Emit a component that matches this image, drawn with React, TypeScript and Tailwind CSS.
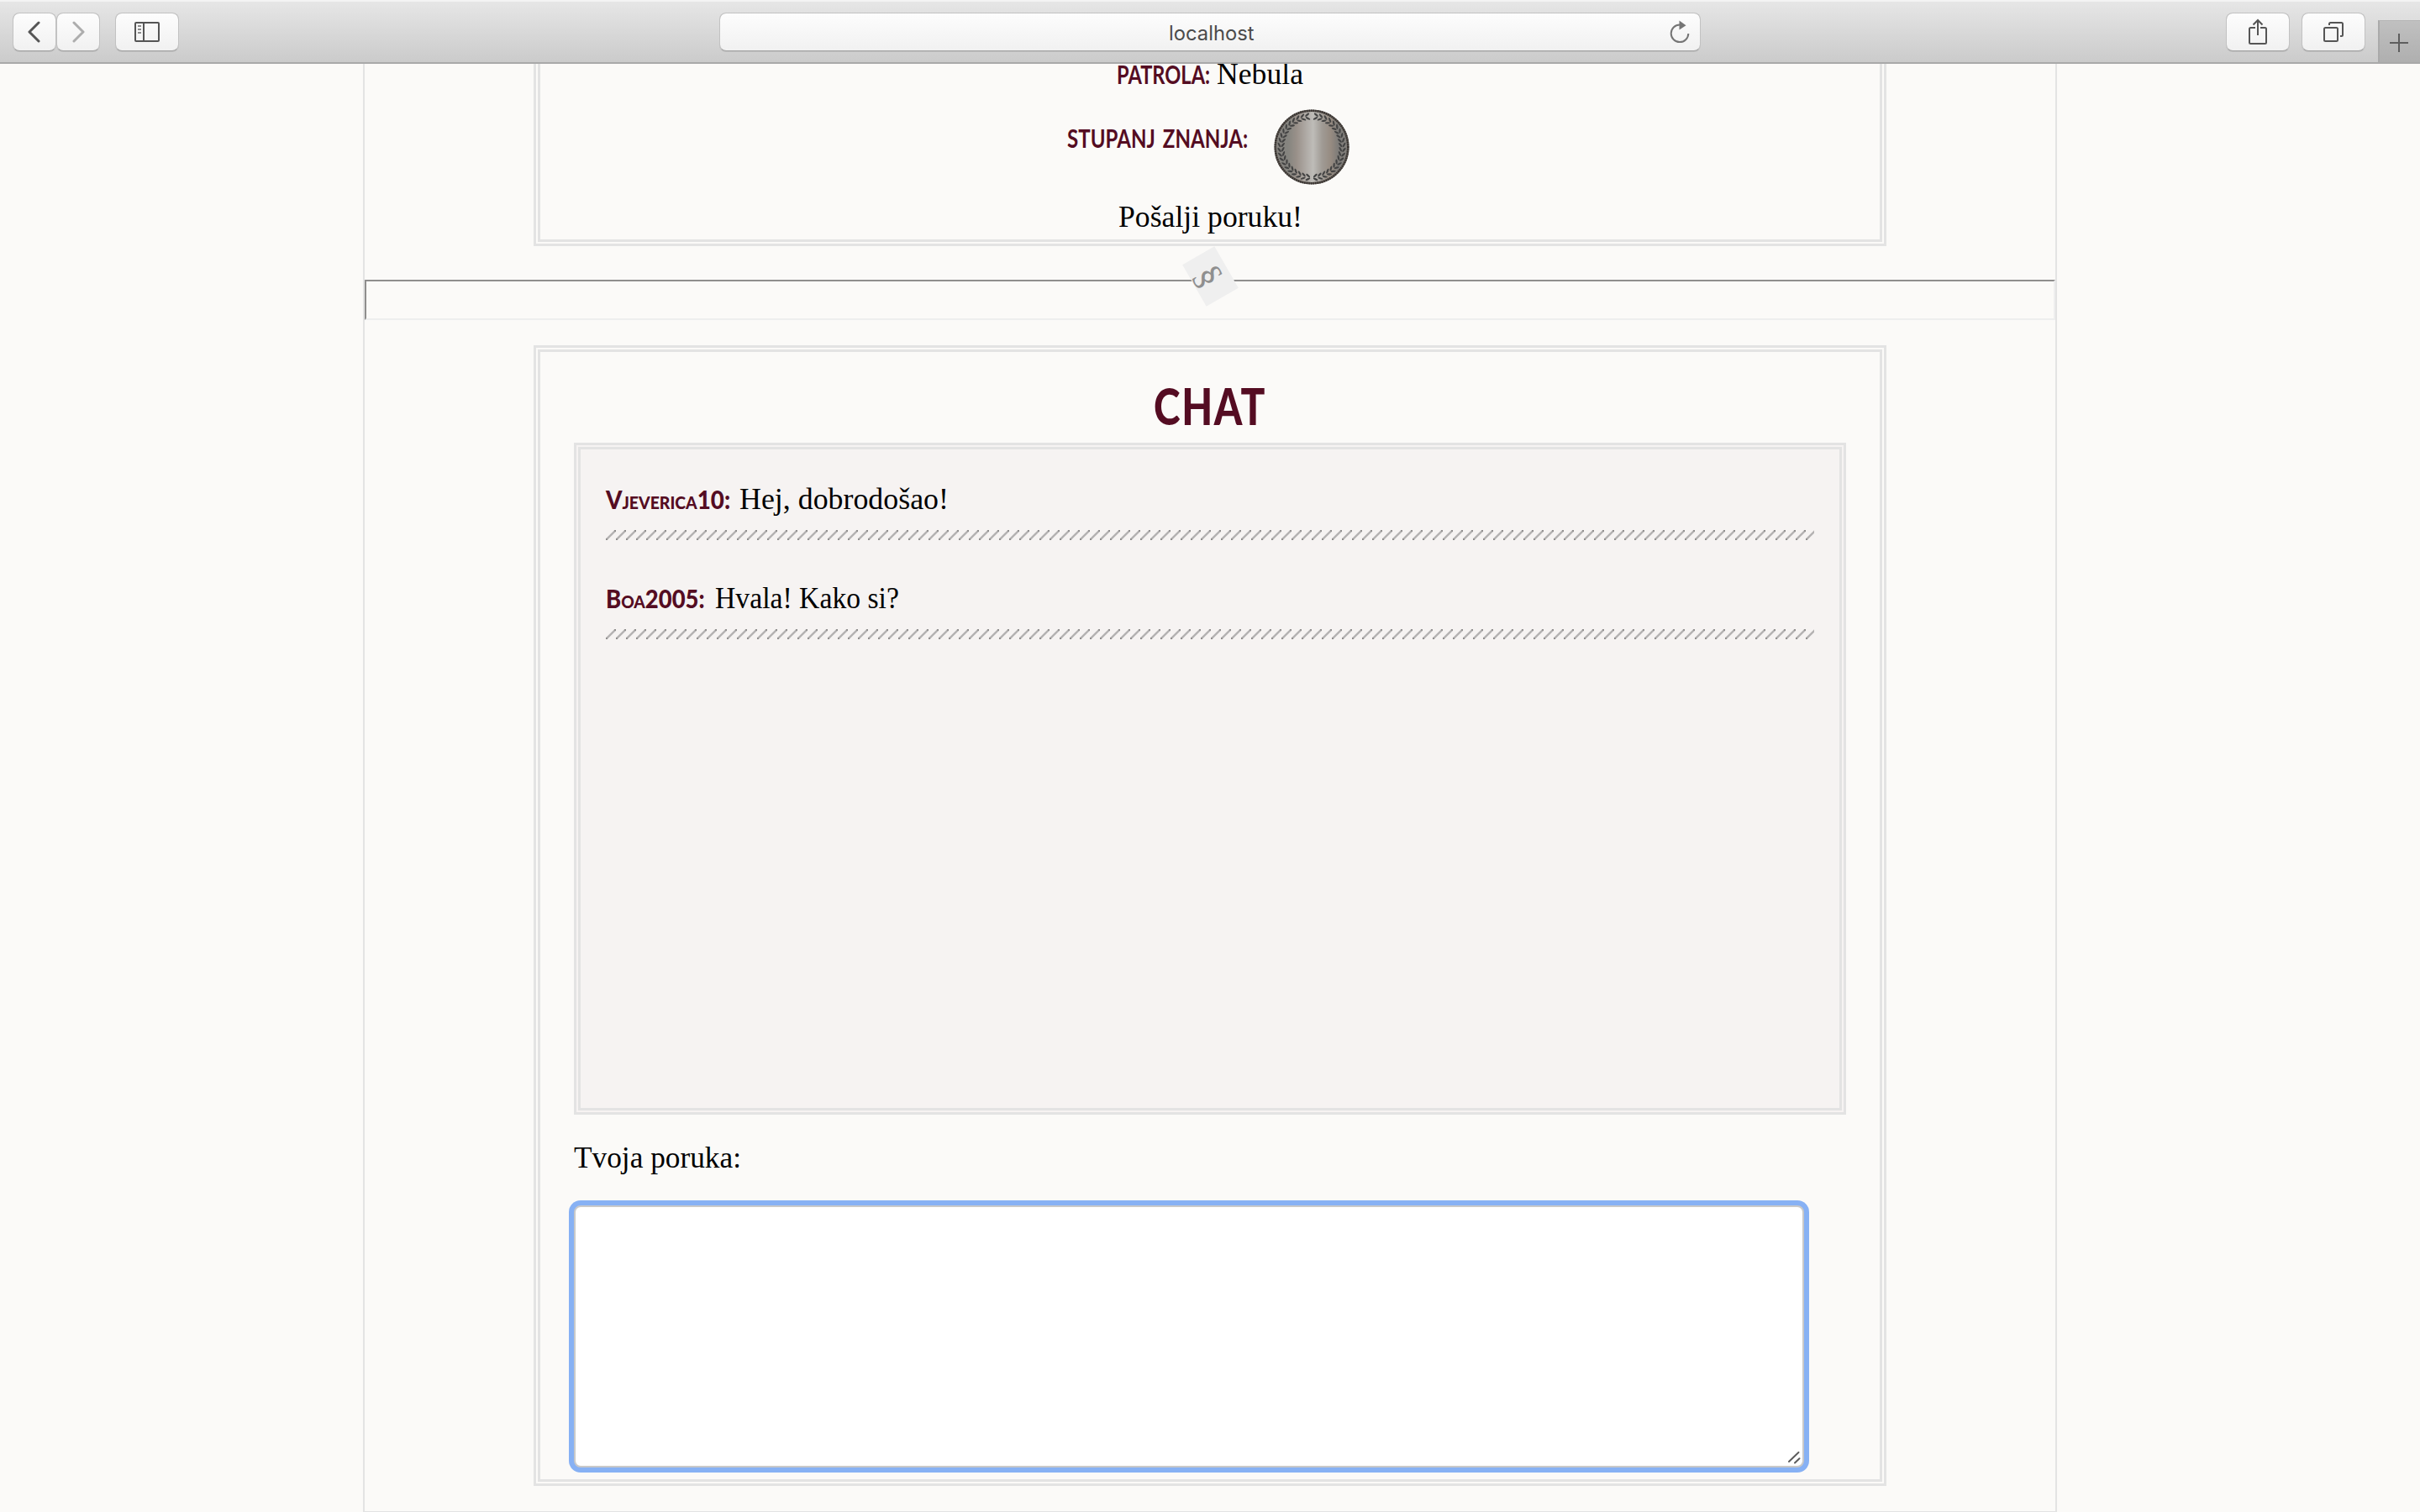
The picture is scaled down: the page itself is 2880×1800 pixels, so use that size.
import React, { useLayoutEffect, useRef, useState } from "react";

/** Text stretched or condensed horizontally to fill the width of its box. */
function FitText({ className, children }: { className: string; children: string }) {
  const box = useRef<HTMLSpanElement>(null);
  const inner = useRef<HTMLSpanElement>(null);
  const [scale, setScale] = useState(1);
  useLayoutEffect(() => {
    if (box.current && inner.current) {
      setScale(box.current.offsetWidth / inner.current.offsetWidth);
    }
  }, [children]);
  return (
    <span ref={box} className={"inline-block shrink-0 whitespace-nowrap " + className}>
      <span ref={inner} className="inline-block origin-left" style={{ transform: `scaleX(${scale})` }}>
        {children}
      </span>
    </span>
  );
}

const serif = "font-['Liberation_Serif',serif] text-[36px] leading-[40px] text-black";
const label = "font-['Lato',sans-serif] text-[30px] leading-[40px] font-bold [word-spacing:4px] text-[#540c22]";
const author = "font-['Lato',sans-serif] text-[30px] leading-[40px] font-black text-[#540c22]";
const button =
  "flex h-[46px] items-center justify-center rounded-[8px] border border-[#c2c2c2] border-b-[#a2a2a2] bg-linear-to-b from-[#fdfdfd] to-[#f1f1f1] bg-clip-padding shadow-[0_1px_0_rgba(0,0,0,0.08)]";

function Toolbar() {
  return (
    <header className="relative z-10 flex h-[76px] w-full shrink-0 items-start border-t-2 border-b-2 border-t-[#f3f3f3] border-b-[#a9a9a9] bg-linear-to-b from-[#e6e6e6] to-[#cbcbcb] pt-[13px] pl-[15px]">
      <div className={button + " w-[52px]"}>
        <svg width="16" height="28" viewBox="0 0 16 28" fill="none" stroke="#555" strokeWidth="3" strokeLinecap="round" strokeLinejoin="round">
          <path d="M13 3 2 14l11 11" />
        </svg>
      </div>
      <div className={button + " w-[52px]"}>
        <svg width="16" height="28" viewBox="0 0 16 28" fill="none" stroke="#adadad" strokeWidth="3" strokeLinecap="round" strokeLinejoin="round">
          <path d="M3 3l11 11L3 25" />
        </svg>
      </div>
      <div className={button + " ml-[18px] w-[76px]"}>
        <svg width="30" height="24" viewBox="0 0 30 24" fill="none" stroke="#555" strokeWidth="2">
          <rect x="1" y="1" width="28" height="22" rx="1" />
          <path d="M11 1v22" />
          <path d="M4 5h4M4 9h4M4 13h4" stroke="#8b8b8b" />
        </svg>
      </div>
      <div className={button + " relative ml-[643px] w-[1168px]"}>
        <FitText className="mt-[3px] mr-[-4px] w-[102px] font-['Inter',sans-serif] text-[24px] leading-[30px] text-[#4b4b4b]">localhost</FitText>
        <svg className="absolute top-[7px] right-[10px]" width="28" height="32" viewBox="0 0 28 32" fill="none">
          <path d="M14 6.5A10.3 10.3 0 1 0 24.3 17" stroke="#757575" strokeWidth="2" />
          <path d="M13.500 1.500 21.500 7.200 13.500 12.500Z" fill="#757575" />
        </svg>
      </div>
      <div className={button + " ml-[625px] w-[76px]"}>
        <svg width="24" height="32" viewBox="0 0 24 32" fill="none" stroke="#555" strokeWidth="2" className="-mt-[2px]">
          <path d="M9 12H3.500Q2 12 2 13.500V29.500Q2 31 3.500 31H20.500Q22 31 22 29.500V13.500Q22 12 20.500 12H15" />
          <path d="M12 21V3M6.500 8.500 12 3l5.500 5.500" />
        </svg>
      </div>
      <div className={button + " ml-[14px] w-[76px]"}>
        <svg width="26" height="26" viewBox="0 0 26 26" fill="none" stroke="#555" strokeWidth="2">
          <rect x="2" y="8" width="16" height="16" rx="1.500" />
          <path d="M8 5V3.500Q8 2 9.500 2H22.500Q24 2 24 3.500V16.500Q24 18 22.500 18H21" />
        </svg>
      </div>
      <div className="mt-[9px] ml-[15px] flex h-[50px] w-[50px] items-center justify-center border-t border-l-2 border-t-[#b5b5b5] border-l-[#aaaaaa] bg-linear-to-b from-[#c0c0c0] to-[#afafaf]">
        <svg width="22" height="22" viewBox="0 0 22 22" stroke="#5e5e5e" strokeWidth="2" className="mt-[3px] mr-[2px]">
          <path d="M11 0v22M0 11h22" />
        </svg>
      </div>
    </header>
  );
}

const leafSteps = Array.from({ length: 20 }, (_, i) => 3.5 + i * 8.7);

function Medal() {
  return (
    <svg width="90" height="90" viewBox="-45 -45 90 90" className="shrink-0">
      <defs>
        <linearGradient id="silver" x1="0" x2="1" y1="0" y2="0">
          <stop offset="0" stopColor="#85827e" />
          <stop offset="0.18" stopColor="#85847f" />
          <stop offset="0.3" stopColor="#9a918a" />
          <stop offset="0.42" stopColor="#aea9a4" />
          <stop offset="0.52" stopColor="#bebcb8" />
          <stop offset="0.64" stopColor="#a09b95" />
          <stop offset="0.76" stopColor="#968b81" />
          <stop offset="0.86" stopColor="#7d7b78" />
          <stop offset="1" stopColor="#85817d" />
        </linearGradient>
      </defs>
      <circle r="44" fill="url(#silver)" />
      <circle r="43.300" fill="none" stroke="#5b5753" strokeWidth="2.600" />
      <circle r="43.300" fill="none" stroke="#37312e" strokeWidth="2.400" strokeDasharray="1.400 1.200" />
      {[1, -1].map((side) => (
        <g key={side} transform={`scale(${side} 1)`}>
          {leafSteps.map((a) => (
            <g key={a} transform={`rotate(${-a}) translate(0 36.600)`} fill="#434343">
              <ellipse cx="2.200" cy="2" rx="3.100" ry="1.150" transform="rotate(30 2.200 2)" />
              <ellipse cx="2.200" cy="-2.300" rx="3.100" ry="1.150" transform="rotate(-38 2.200 -2.300)" />
            </g>
          ))}
        </g>
      ))}
    </svg>
  );
}

/** Row of short diagonal strokes that closes every message. */
function Hatching() {
  return (
    <svg width="1438" height="12" className="mt-[17px] block">
      <defs>
        <pattern id="hatch" width="12" height="12" patternUnits="userSpaceOnUse">
          <path d="M-1 13 13 -1" stroke="#b4b2b2" strokeWidth="2.400" />
          <path d="M0 12 1.500 10.500M10.500 1.500 12 0" stroke="#8c8a8a" strokeWidth="2" />
        </pattern>
      </defs>
      <rect width="1438" height="12" fill="url(#hatch)" />
    </svg>
  );
}

export default function App() {
  return (
    <div className="flex h-[1800px] w-[2880px] flex-col overflow-hidden bg-[#fbfaf8]">
      <Toolbar />
      <main className="mx-auto w-[2016px] shrink-0 border-x-2 border-b-2 border-[#e3e3e3] pb-[30px]">
        <section className="mx-auto flex w-[1610px] flex-col items-center border-8 border-t-0 border-double border-[#e3e3e3] pb-[7px]">
          <p className="-mt-[8px] -ml-[1px] flex items-baseline gap-[8px]">
            <FitText className={label + " w-[111px]"}>PATROLA:</FitText>
            <FitText className={serif + " w-[103px]"}>Nebula</FitText>
          </p>
          <div className="mt-[22px] -ml-[4px] flex h-[90px] items-start gap-[31px]">
            <FitText className={label + " mt-[14px] w-[215px]"}>STUPANJ ZNANJA:</FitText>
            <Medal />
          </div>
          <p className="mt-[18px] ml-[1px] flex">
            <FitText className={serif + " w-[219px]"}>Pošalji poruku!</FitText>
          </p>
        </section>

        <div className="relative mt-[40px] h-[48px] border-2 border-t-[#8f8e8d] border-r-[#eeeeee] border-b-[#eeeeee] border-l-[#8f8e8d]">
          <div className="absolute top-[-28px] left-[976px] flex h-[44px] w-[57px] rotate-60 items-center justify-center bg-[#efefef] font-['Liberation_Serif',serif] text-[44px] leading-[44px] text-[#8f8f8f]">
            <span className="-mt-[3px] -ml-[2px] pt-[7px]">§</span>
          </div>
        </div>

        <section className="mx-auto mt-[30px] w-[1610px] border-8 border-double border-[#e3e3e3] px-[40px] pt-[34px] pb-[14px]">
          <h1 className="flex justify-center">
            <FitText className="w-[134px] font-['Lato',sans-serif] text-[60px] leading-[60px] font-black tracking-[2px] text-[#540c22]">CHAT</FitText>
          </h1>
          <div className="mt-[14px] h-[800px] w-[1514px] border-8 border-double border-[#e3e3e3] bg-[#f6f3f2] px-[30px] pt-[39px]">
            <div className="flex h-[40px] items-baseline gap-[11px] [font-variant:small-caps]">
              <FitText className={author + " w-[148px]"}>Vjeverica10:</FitText>
              <FitText className={serif + " w-[249px] [font-variant:normal]"}>Hej, dobrodošao!</FitText>
            </div>
            <Hatching />
            <div className="mt-[49px] flex h-[40px] items-baseline gap-[12px] [font-variant:small-caps]">
              <FitText className={author + " w-[118px]"}>Boa2005:</FitText>
              <FitText className={serif + " w-[219px] [font-variant:normal]"}>Hvala! Kako si?</FitText>
            </div>
            <Hatching />
          </div>
          <label htmlFor="message" className="mt-[31px] flex">
            <FitText className={serif + " w-[199px]"}>Tvoja poruka:</FitText>
          </label>
          <div className="relative mt-[37px] h-[312px] w-[1464px]">
            <textarea
              id="message"
              className="block h-full w-full resize-none rounded-[8px] border-2 border-[#c9c9c9] bg-white shadow-[0_0_0_6px_#87b1f4] outline-none"
            />
            <svg className="absolute right-[4px] bottom-[4px]" width="16" height="16" viewBox="0 0 16 16" stroke="#5c5c5c" strokeWidth="2" strokeLinecap="round">
              <path d="M2 13 13.500 2M9 14.500 14.500 9.200" />
            </svg>
          </div>
        </section>
      </main>
    </div>
  );
}
